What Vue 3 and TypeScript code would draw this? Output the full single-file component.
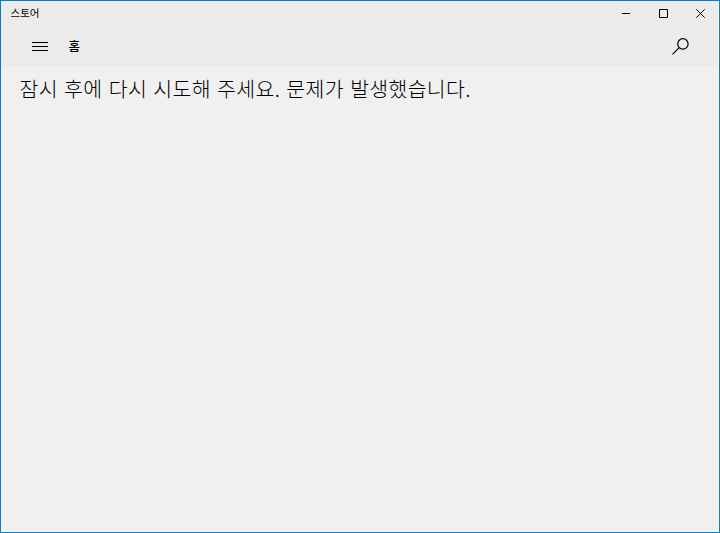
<script setup lang="ts">
const title: string = '스토어'
const section: string = '홈'
const message: string = '잠시 후에 다시 시도해 주세요. 문제가 발생했습니다.'
</script>

<template>
  <div class="window">
    <header class="top">
      <div class="titlebar">
        <span class="title">{{ title }}</span>
        <div class="controls">
          <button class="control" aria-label="최소화">
            <svg width="9" height="9" viewBox="0 0 9 9"><path d="M0 4.5H8" /></svg>
          </button>
          <button class="control" aria-label="최대화">
            <svg width="9" height="9" viewBox="0 0 9 9"><path d="M.5 .5H8.5V8.5H.5Z" /></svg>
          </button>
          <button class="control" aria-label="닫기">
            <svg width="9" height="9" viewBox="0 0 9 9"><path d="M.3 .3L8.7 8.7M8.7 .3L.3 8.7" /></svg>
          </button>
        </div>
      </div>
      <nav class="navbar">
        <button class="icon-button menu" aria-label="메뉴">
          <svg width="16" height="9" viewBox="0 0 16 9"><path d="M0 .5H16M0 4.5H16M0 8.5H16" /></svg>
        </button>
        <span class="section">{{ section }}</span>
        <button class="icon-button search" aria-label="검색">
          <svg width="17" height="17" viewBox="0 0 17 17">
            <circle cx="10.9" cy="5.9" r="5.2" />
            <path d="M7.2 9.6L.5 16.3" />
          </svg>
        </button>
      </nav>
    </header>
    <main class="content">
      <p class="message">{{ message }}</p>
    </main>
  </div>
</template>

<style>
body {
  margin: 0;
}
</style>

<style scoped>
.window {
  display: flex;
  flex-direction: column;
  box-sizing: border-box;
  width: 100%;
  height: 100vh;
  border: 1px solid #0f7bc4;
  background: #f0f0f0;
  box-shadow: inset -1px -1px #fafafa;
  color: #000;
  font-family: "Noto Sans CJK KR", sans-serif;
  overflow: hidden;
}
.top {
  height: 65px;
  margin-right: 1px;
  background: #ebebeb;
}
.titlebar {
  display: flex;
  justify-content: space-between;
  height: 25px;
}
.title {
  padding-left: 9.5px;
  font-size: 10.5px;
  line-height: 24px;
}
.controls {
  display: flex;
  margin-right: -1px;
}
button {
  display: flex;
  align-items: center;
  justify-content: center;
  padding: 0;
  border: 0;
  background: none;
}
svg {
  display: block;
  fill: none;
  stroke: #000;
  stroke-width: 1;
}
.control {
  width: 37px;
}
.navbar {
  display: flex;
  align-items: center;
  height: 40px;
}
.icon-button {
  width: 38px;
  height: 40px;
}
.menu {
  margin-left: 20px;
}
.section {
  margin-left: 9.5px;
  font-size: 12.5px;
  font-weight: 500;
  line-height: 38px;
}
.search {
  width: 37px;
  margin-left: auto;
  margin-right: 19px;
}
.search svg {
  stroke-width: 1.2;
}
.content {
  padding: 8px 18.5px;
}
.message {
  margin: 0;
  font-size: 20.5px;
  font-weight: 300;
  letter-spacing: 0.32px;
  line-height: 29px;
  white-space: nowrap;
  word-spacing: 1.4px;
}
</style>
